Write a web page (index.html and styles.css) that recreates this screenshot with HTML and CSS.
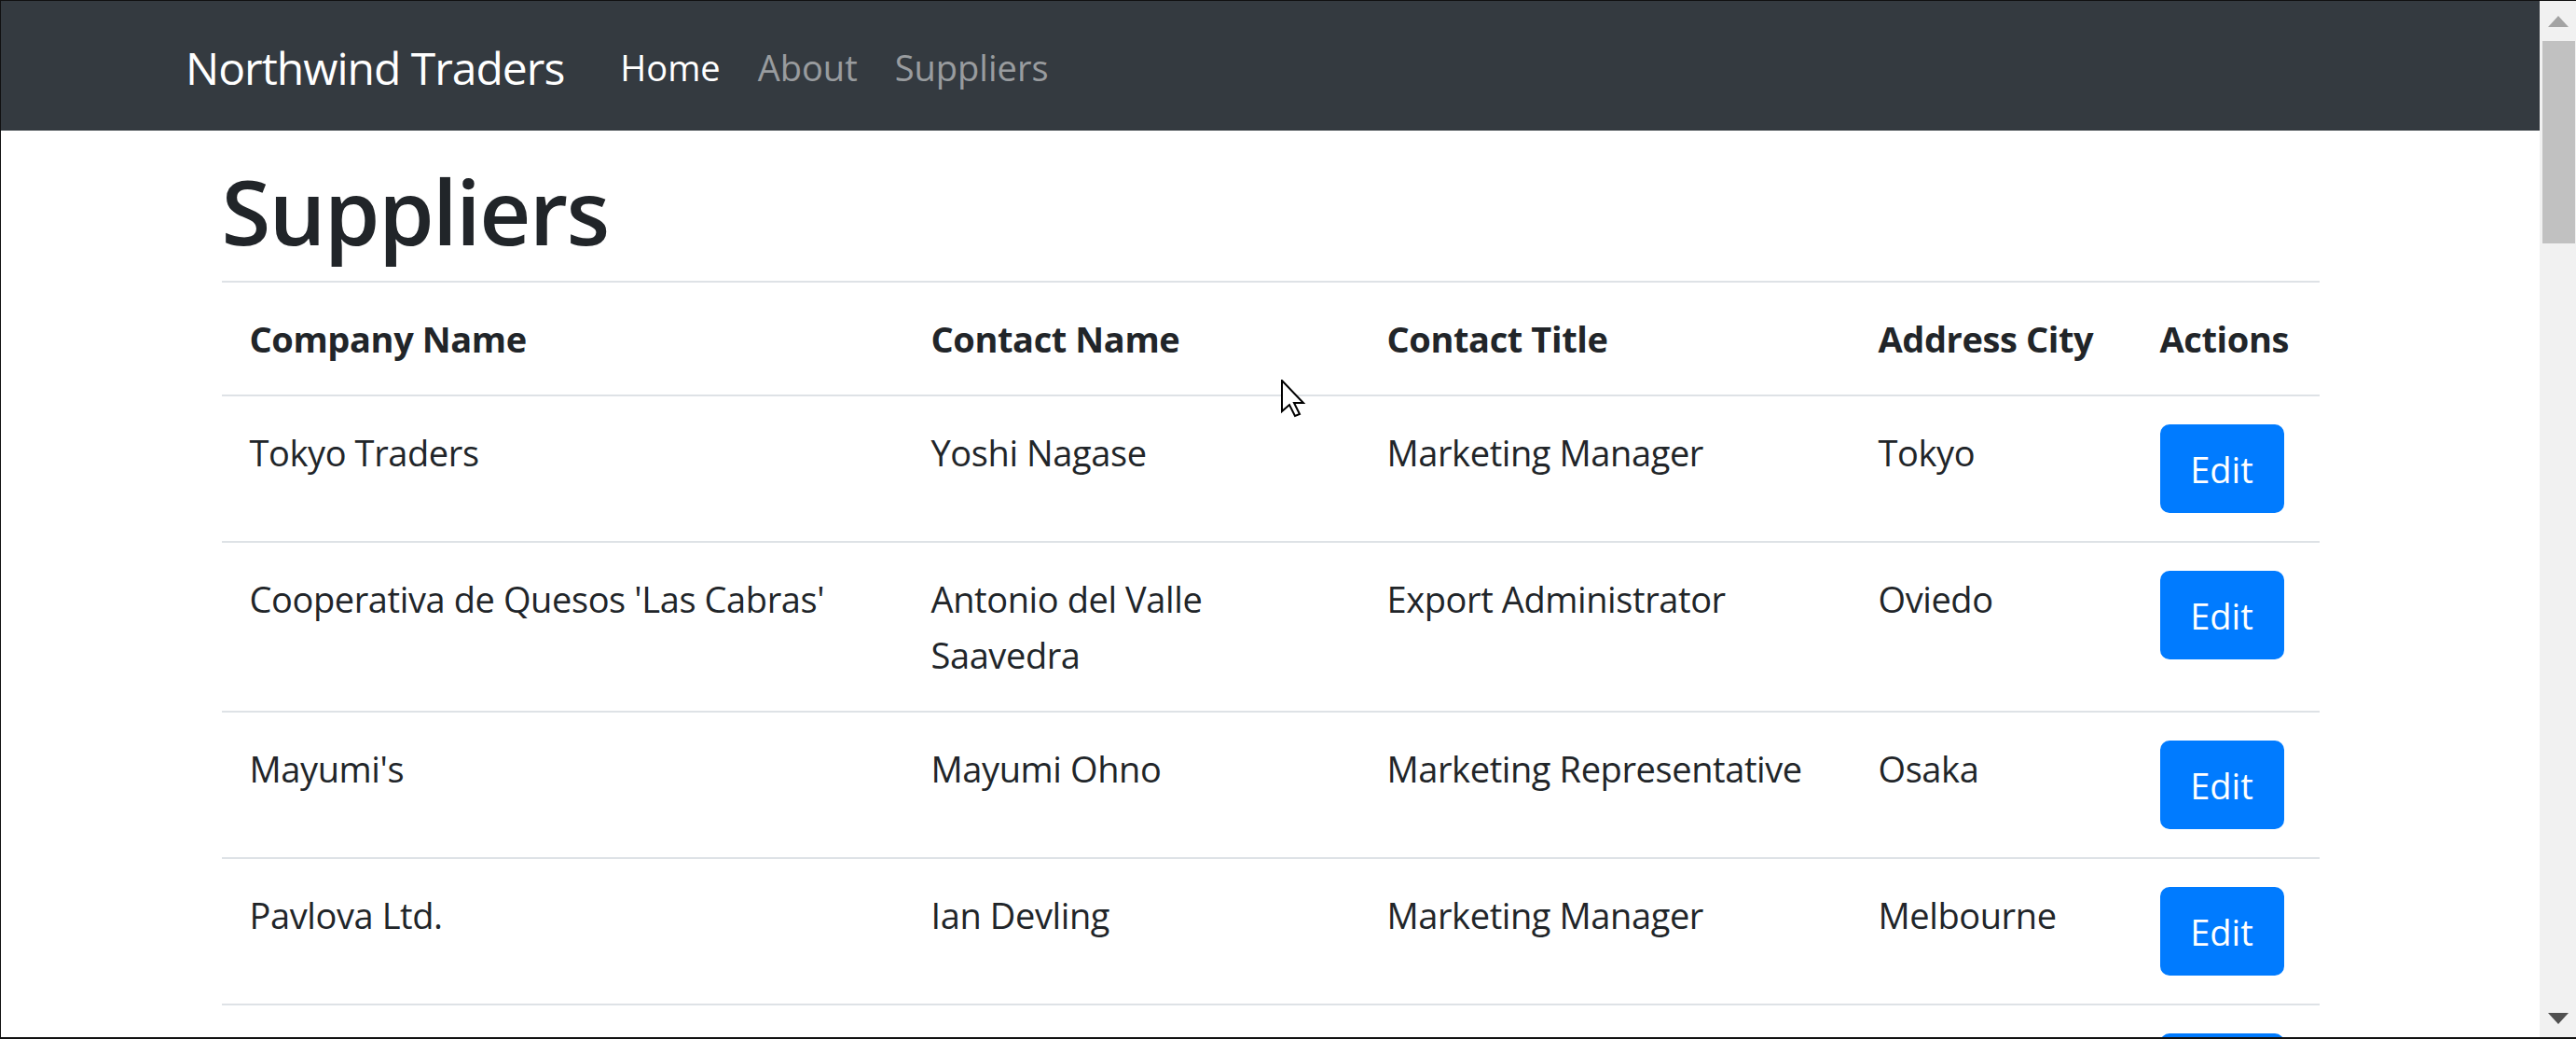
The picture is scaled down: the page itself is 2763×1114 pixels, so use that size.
FILE: index.html
```html
<!DOCTYPE html>
<html lang="en">
<head>
<meta charset="utf-8">
<title>Suppliers - Northwind Traders</title>
<link rel="stylesheet" href="styles.css">
</head>
<body>
<div class="window">
  <div class="viewport">
    <nav class="navbar">
      <div class="nav-inner">
        <a class="brand" href="#">Northwind Traders</a>
        <ul class="nav">
          <li><a class="nav-link active" href="#">Home</a></li>
          <li><a class="nav-link" href="#">About</a></li>
          <li><a class="nav-link" href="#">Suppliers</a></li>
        </ul>
      </div>
    </nav>
    <main class="container">
      <h1 class="title">Suppliers</h1>
      <table class="table">
        <colgroup>
          <col class="c-company">
          <col class="c-contact">
          <col class="c-title">
          <col class="c-city">
          <col class="c-actions">
        </colgroup>
        <thead>
          <tr>
            <th>Company Name</th>
            <th>Contact Name</th>
            <th>Contact Title</th>
            <th>Address City</th>
            <th>Actions</th>
          </tr>
        </thead>
        <tbody>
          <tr>
            <td>Tokyo Traders</td>
            <td>Yoshi Nagase</td>
            <td>Marketing Manager</td>
            <td>Tokyo</td>
            <td><a class="btn" href="#">Edit</a></td>
          </tr>
          <tr>
            <td>Cooperativa de Quesos 'Las Cabras'</td>
            <td>Antonio del Valle Saavedra</td>
            <td>Export Administrator</td>
            <td>Oviedo</td>
            <td><a class="btn" href="#">Edit</a></td>
          </tr>
          <tr>
            <td>Mayumi's</td>
            <td>Mayumi Ohno</td>
            <td>Marketing Representative</td>
            <td>Osaka</td>
            <td><a class="btn" href="#">Edit</a></td>
          </tr>
          <tr>
            <td>Pavlova Ltd.</td>
            <td>Ian Devling</td>
            <td>Marketing Manager</td>
            <td>Melbourne</td>
            <td><a class="btn" href="#">Edit</a></td>
          </tr>
          <tr>
            <td>Specialty Biscuits, Ltd.</td>
            <td>Peter Wilson</td>
            <td>Sales Representative</td>
            <td>Manchester</td>
            <td><a class="btn" href="#">Edit</a></td>
          </tr>
        </tbody>
      </table>
    </main>
  </div>
  <div class="scrollbar">
    <div class="sb-btn">
      <svg width="22" height="12" viewBox="0 0 22 12"><polygon points="11,0 22,12 0,12" fill="#a3a3a3"/></svg>
    </div>
    <div class="sb-thumb"></div>
    <div class="sb-track"></div>
    <div class="sb-btn sb-btn-down">
      <svg width="22" height="12" viewBox="0 0 22 12"><polygon points="0,0 22,0 11,12" fill="#505050"/></svg>
    </div>
  </div>
</div>
<svg class="cursor" width="28" height="42" viewBox="0 0 28 42">
  <path d="M1 1 L1 34 L9 27 L15 39 L20 37 L14 25 L24 25 Z" fill="#ffffff" stroke="#000000" stroke-width="2" stroke-linejoin="miter"/>
</svg>
</body>
</html>
```

FILE: styles.css
```css
* {
  box-sizing: border-box;
}

html, body {
  margin: 0;
  padding: 0;
}

body {
  height: 1114px;
  overflow: hidden;
  background: #ffffff;
  font-family: "Open Sans", "Noto Sans", sans-serif;
  color: #212529;
  border-top: 1px solid #111111;
  border-left: 1px solid #111111;
  border-bottom: 2px solid #111111;
  position: relative;
}

.window {
  display: flex;
  height: 100%;
}

.viewport {
  flex: 1;
  overflow: hidden;
  min-width: 0;
}

/* Navbar */
.navbar {
  background: #343a40;
  height: 139px;
  padding-top: 3px;
  display: flex;
  align-items: center;
}

.nav-inner {
  width: 2327px;
  margin: 0 auto;
  display: flex;
  align-items: center;
}

.brand {
  font-size: 48px;
  line-height: 75px;
  letter-spacing: -1px;
  color: #ffffff;
  text-decoration: none;
  margin-right: 40px;
  white-space: nowrap;
}

.nav {
  list-style: none;
  margin: 0;
  padding: 0;
  display: flex;
}

.nav-link {
  display: block;
  padding: 0 20px;
  font-size: 38px;
  line-height: 60px;
  letter-spacing: 0;
  color: rgba(255, 255, 255, 0.5);
  text-decoration: none;
}

.nav-link.active {
  color: #ffffff;
}

/* Content */
.container {
  width: 2250px;
  margin: 0 auto;
}

.title {
  margin: 28px 0 18px 0;
  font-size: 96px;
  line-height: 115px;
  font-weight: 600;
  letter-spacing: -1.7px;
  color: #212529;
}

.table {
  width: 2250px;
  border-collapse: collapse;
  table-layout: fixed;
  font-size: 38px;
  line-height: 60px;
  letter-spacing: -0.4px;
  color: #212529;
}

.c-company { width: 731px; }
.c-contact { width: 489px; }
.c-title { width: 527px; }
.c-city { width: 302px; }
.c-actions { width: 201px; }

.table th,
.table td {
  padding: 30px;
  border-top: 2px solid #dee2e6;
  text-align: left;
  vertical-align: top;
}

.table th {
  font-weight: 700;
  letter-spacing: -0.4px;
}

.btn {
  display: inline-block;
  width: 133px;
  padding: 15.5px 0;
  text-align: center;
  background: #007bff;
  border: 2px solid #007bff;
  border-radius: 10px;
  color: #ffffff;
  text-decoration: none;
  font-size: 38px;
  line-height: 60px;
  letter-spacing: 0;
  vertical-align: top;
}

/* Scrollbar */
.scrollbar {
  width: 39px;
  flex: none;
  background: #f1f1f1;
  display: flex;
  flex-direction: column;
}

.sb-btn {
  height: 43px;
  display: flex;
  align-items: center;
  justify-content: center;
  flex: none;
}

.sb-btn-down {
  height: 40px;
}

.sb-thumb {
  height: 217px;
  margin: 0 1px 0 3px;
  background: #c1c1c1;
  flex: none;
}

.sb-track {
  flex: 1;
}

/* Mouse pointer overlay */
.cursor {
  position: absolute;
  left: 1373px;
  top: 406px;
}
```
